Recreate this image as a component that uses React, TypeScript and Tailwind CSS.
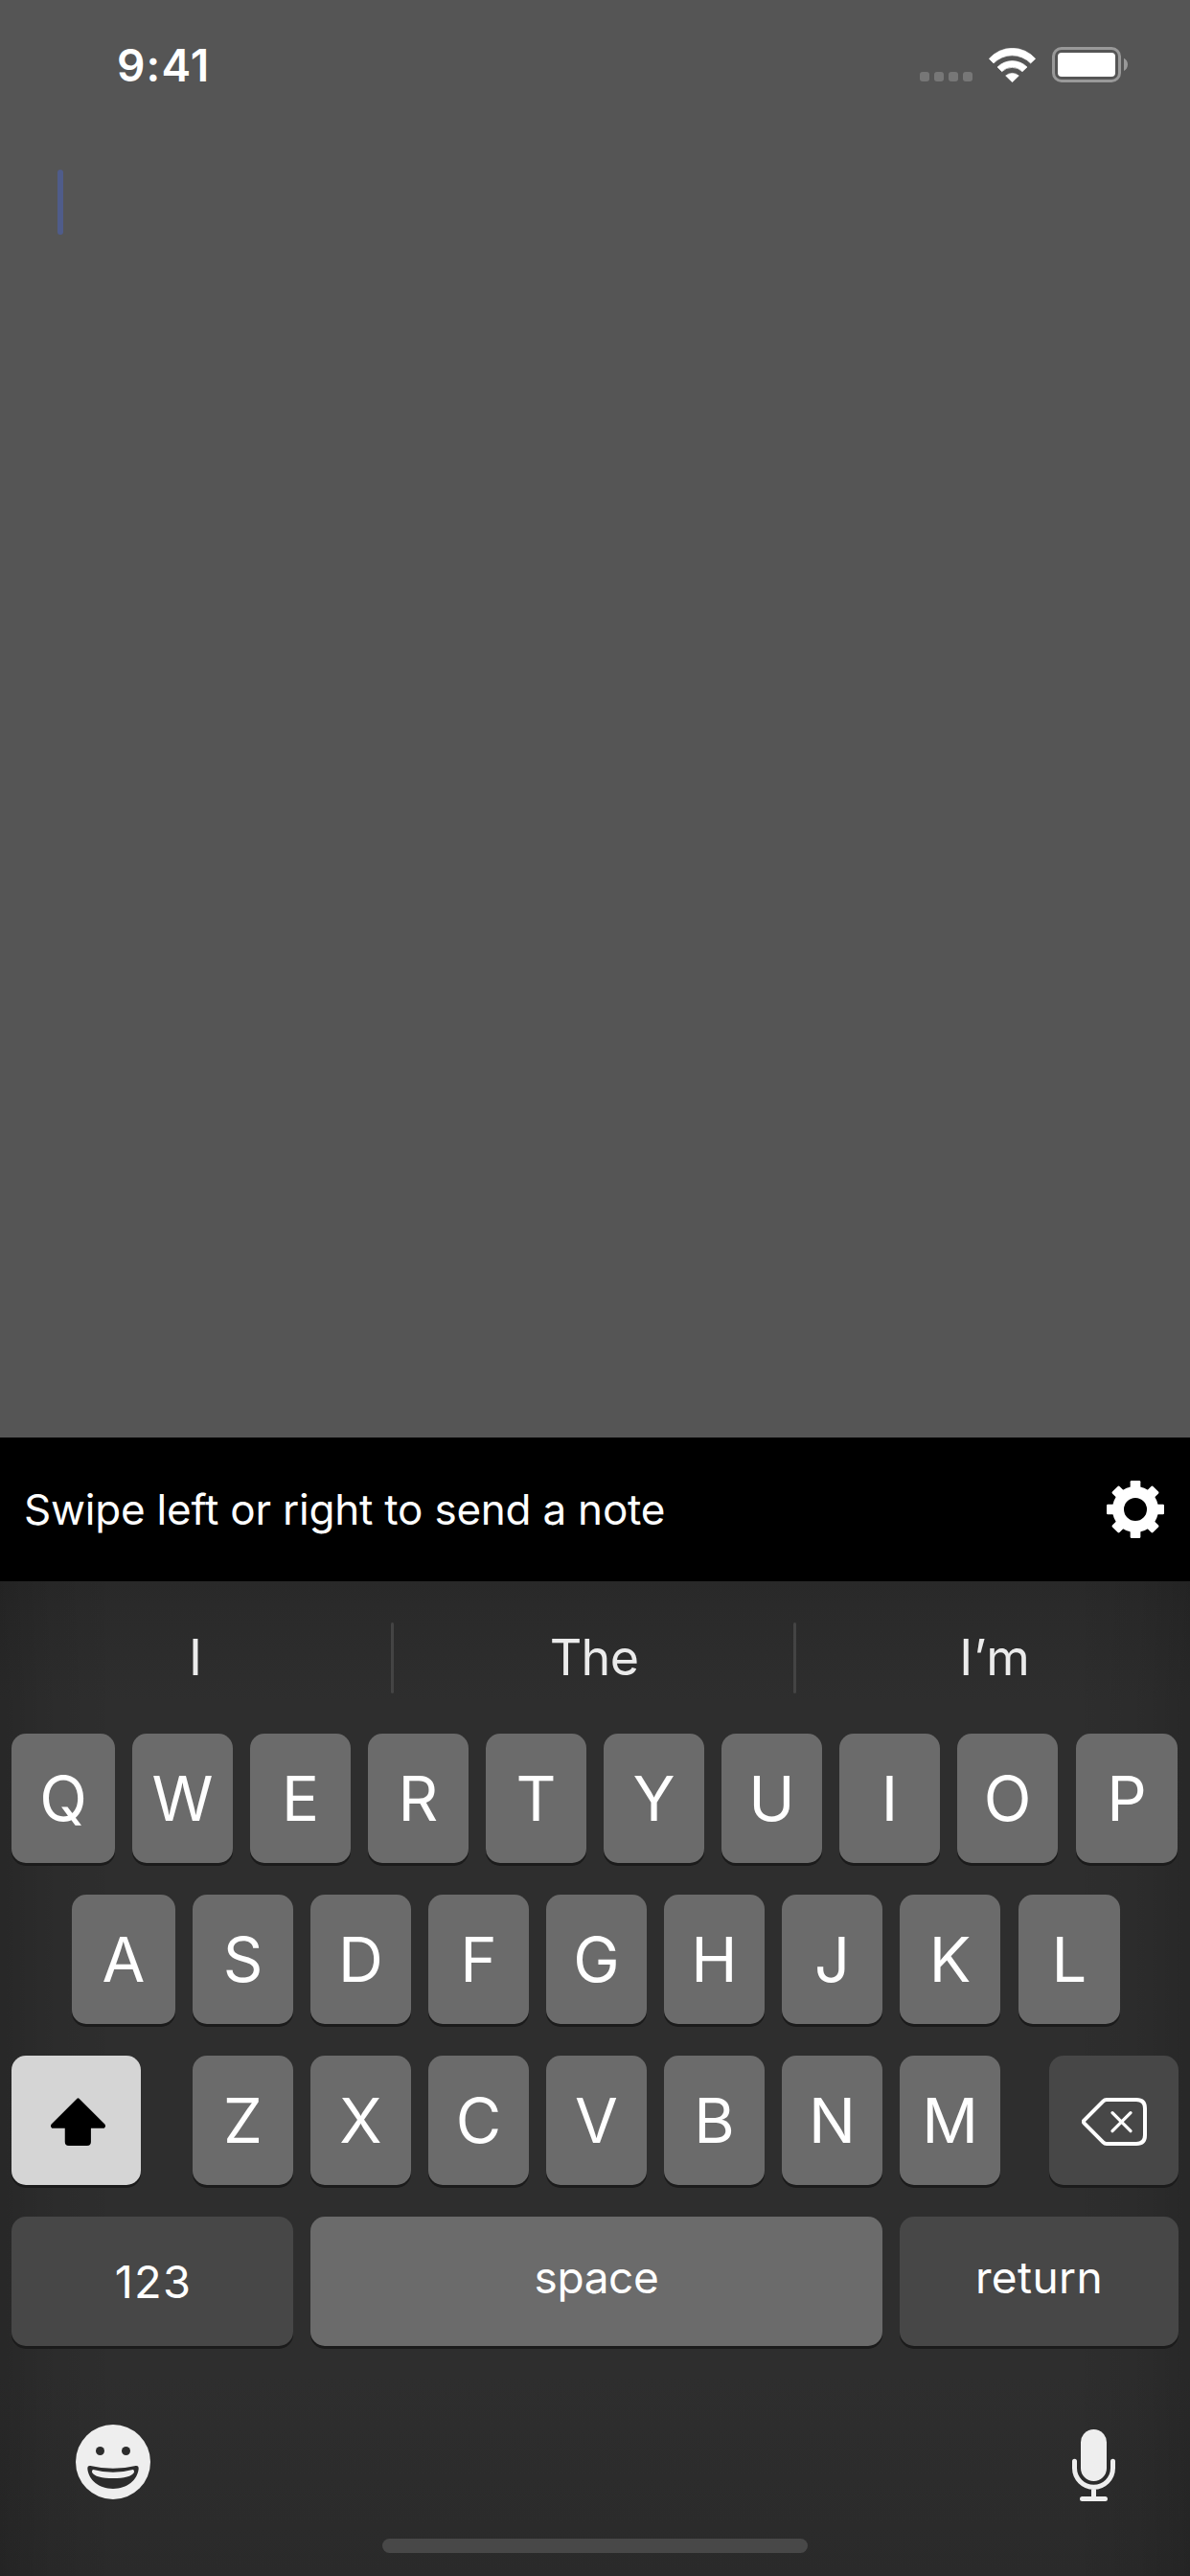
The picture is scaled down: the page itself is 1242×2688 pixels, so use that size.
import type { ReactNode } from 'react';

function SignalDots() {
  return (
    <div className="flex gap-[5px]">
      {[0, 1, 2, 3].map((i) => (
        <span key={i} className="size-[10px] rounded-[3px] bg-[#777777]" />
      ))}
    </div>
  );
}

function WifiIcon() {
  return (
    <svg className="h-9 w-[49px]" viewBox="276 57 147 108" fill="#fff" stroke="#fff" strokeWidth="2" strokeLinejoin="round">
      <path d="M277 91A96 96 0 0 1 422 91L407 105A81 81 0 0 0 291 105Z" />
      <path d="M303 117A66 66 0 0 1 396 117L381 131A46 46 0 0 0 317 131Z" />
      <path d="M329 144A31 31 0 0 1 370 144L349.500 164Z" />
    </svg>
  );
}

function BatteryIcon() {
  return (
    <svg className="h-[37px] w-[79px]" viewBox="474 57 237 111">
      <rect x="478.500" y="61.500" width="207" height="102" rx="25" fill="none" stroke="#999" strokeWidth="9" />
      <rect x="492" y="75" width="180" height="75" rx="12" fill="#fff" />
      <path d="M699 92C715 99 715 124 699 132Z" fill="#999" />
    </svg>
  );
}

function GearIcon() {
  return (
    <svg className="size-[60px]" viewBox="-90 -90 180 180" fill="#fff">
      {[0, 45, 90, 135].map((angle) => (
        <g key={angle} transform={`rotate(${angle})`}>
          <rect x="-16" y="-90" width="32" height="36" rx="4" />
          <rect x="-16" y="54" width="32" height="36" rx="4" />
        </g>
      ))}
      <circle r="54" fill="none" stroke="#fff" strokeWidth="36" />
    </svg>
  );
}

function ShiftIcon() {
  return (
    <svg className="h-[50px] w-[57px]" viewBox="160 208 170 149">
      <path d="M242 210Q245 207 248 210L328 290Q333 297 326 303L285 303L285 345Q285 357 273 357L216 357Q204 357 204 345L204 303L164 303Q157 297 162 290Z" />
    </svg>
  );
}

function DeleteIcon() {
  return (
    <svg className="h-[50px] w-[68px]" viewBox="897 207 204 150" fill="none" stroke="#fff" strokeLinecap="round" strokeLinejoin="round">
      <path strokeWidth="12" d="M975 213H1068Q1095 213 1095 240V324Q1095 351 1068 351H975Q969 351 964 346L905 287Q900 282 905 277L964 218Q969 213 975 213Z" />
      <path strokeWidth="10" d="M993 254L1050 311M1050 254L993 311" />
    </svg>
  );
}

function EmojiIcon() {
  return (
    <svg className="size-[78px]" viewBox="57 90 234 234">
      <circle cx="174" cy="207" r="117" fill="#eeeeee" />
      <circle cx="133.500" cy="172.500" r="13.500" fill="#2c2c2c" />
      <circle cx="214.500" cy="172.500" r="13.500" fill="#2c2c2c" />
      <path d="M103 219Q174 236 245 219Q255 218 254 229C250 264 218 291 174 291C130 291 98 264 94 229Q93 218 103 219Z" fill="#2c2c2c" />
      <path d="M112 231Q174 248 236 231Q241 232 240 239C234 252 208 258 174 258C140 258 114 252 108 239Q107 232 112 231Z" fill="#eeeeee" />
    </svg>
  );
}

function MicIcon() {
  return (
    <svg className="h-[75px] w-[45px]" viewBox="117 75 135 225" fill="none" stroke="#eeeeee" strokeLinecap="round">
      <rect x="144" y="75" width="81" height="162" rx="40.500" fill="#eeeeee" stroke="none" />
      <path strokeWidth="15" d="M124.500 175V196A60 60 0 0 0 244.500 196V175M184.500 256V290M148.500 292.500H220.500" />
    </svg>
  );
}

const KEY_BASE = 'flex h-[135px] shrink-0 items-center justify-center rounded-[15px] text-white shadow-[0_3px_0_#1b1b1b]';

function Key({ className, children }: { className: string; children: ReactNode }) {
  return (
    <button type="button" className={`${KEY_BASE} ${className}`}>
      {children}
    </button>
  );
}

function LetterRow({ letters, className }: { letters: string; className: string }) {
  const last = letters.length - 1;
  return (
    <div className={`flex gap-[18px] ${className}`}>
      {letters.split('').map((letter, i) => (
        <Key
          key={letter}
          className={`bg-[#6b6b6b] text-[65px] leading-none ${i === 0 ? 'w-[108px]' : i === last ? 'ml-px w-[106px]' : 'w-[105px]'}`}
        >
          {letter}
        </Key>
      ))}
    </div>
  );
}

export default function App() {
  return (
    <div className="flex h-[2688px] w-[1242px] flex-col overflow-hidden bg-[#555555] font-['Inter',sans-serif]">
      <header className="flex h-[136px] items-center justify-between pl-[122px] pr-[65px]">
        <span className="text-[46px] font-semibold leading-none tracking-[1.2px] text-white">9:41</span>
        <div className="mb-px flex items-center">
          <div className="mr-[17px] mt-[25px]">
            <SignalDots />
          </div>
          <div className="mr-[17px] flex">
            <WifiIcon />
          </div>
          <BatteryIcon />
        </div>
      </header>

      <main className="flex-1 px-[60px] pt-[41px]">
        <div className="h-[68px] w-[6px] rounded-full bg-[#4f5c8a]" />
      </main>

      <div className="flex h-[150px] shrink-0 items-center justify-between bg-black pl-[25px] pr-[27px]">
        <p className="whitespace-nowrap text-[44px] leading-none tracking-[-0.22px] text-white">
          Swipe left or right to send a note
        </p>
        <GearIcon />
      </div>

      <section className="flex h-[1038px] shrink-0 flex-col bg-[linear-gradient(to_right,rgba(0,0,0,0.14),rgba(0,0,0,0.06)_4%,transparent_10%,transparent_90%,rgba(0,0,0,0.06)_96%,rgba(0,0,0,0.14)),linear-gradient(to_bottom,#292929,#2e2e2e_12%,#2e2e2e_80%,#2a2a2a)]">
        <div className="flex h-[159px] items-center text-[52px] leading-none text-[#ebebeb]">
          <div className="w-[408px] text-center">I</div>
          <div className="h-[74px] w-[3px] rounded-full bg-[#444444]" />
          <div className="w-[417px] pl-px text-center tracking-[-0.7px]">The</div>
          <div className="h-[74px] w-[3px] rounded-full bg-[#444444]" />
          <div className="w-[411px] pl-[4px] text-center tracking-[0.8px]">I’m</div>
        </div>

        <div className="flex flex-col gap-[33px]">
          <LetterRow letters="QWERTYUIOP" className="pl-3" />
          <LetterRow letters="ASDFGHJKL" className="pl-[75px]" />
          <div className="flex pl-3">
            <Key className="w-[135px] bg-[#d5d5d5] pl-1 pt-[3px]">
              <ShiftIcon />
            </Key>
            <div className="ml-[54px] mr-[51px] flex gap-[18px]">
              {'ZXCVBNM'.split('').map((letter) => (
                <Key key={letter} className="w-[105px] bg-[#6b6b6b] text-[65px] leading-none">
                  {letter}
                </Key>
              ))}
            </div>
            <Key className="w-[135px] bg-[#474747] pl-px pt-[3px]">
              <DeleteIcon />
            </Key>
          </div>
          <div className="flex gap-[18px] pl-3 text-[46px] leading-none">
            <Key className="w-[294px] bg-[#474747] pb-px pl-[2px] text-[47px] tracking-[1.2px]">123</Key>
            <Key className="w-[597px] bg-[#6b6b6b] pb-[10px] tracking-[-0.4px]">space</Key>
            <Key className="w-[291px] bg-[#474747] pb-[10px] tracking-[0.4px]">return</Key>
          </div>
        </div>

        <div className="mt-[82px] flex items-start justify-between pl-[79px] pr-[78px]">
          <EmojiIcon />
          <div className="pt-[5px]">
            <MicIcon />
          </div>
        </div>
        <div className="mx-auto mt-[39px] h-[15px] w-[444px] rounded-full bg-[#484848]" />
      </section>
    </div>
  );
}
